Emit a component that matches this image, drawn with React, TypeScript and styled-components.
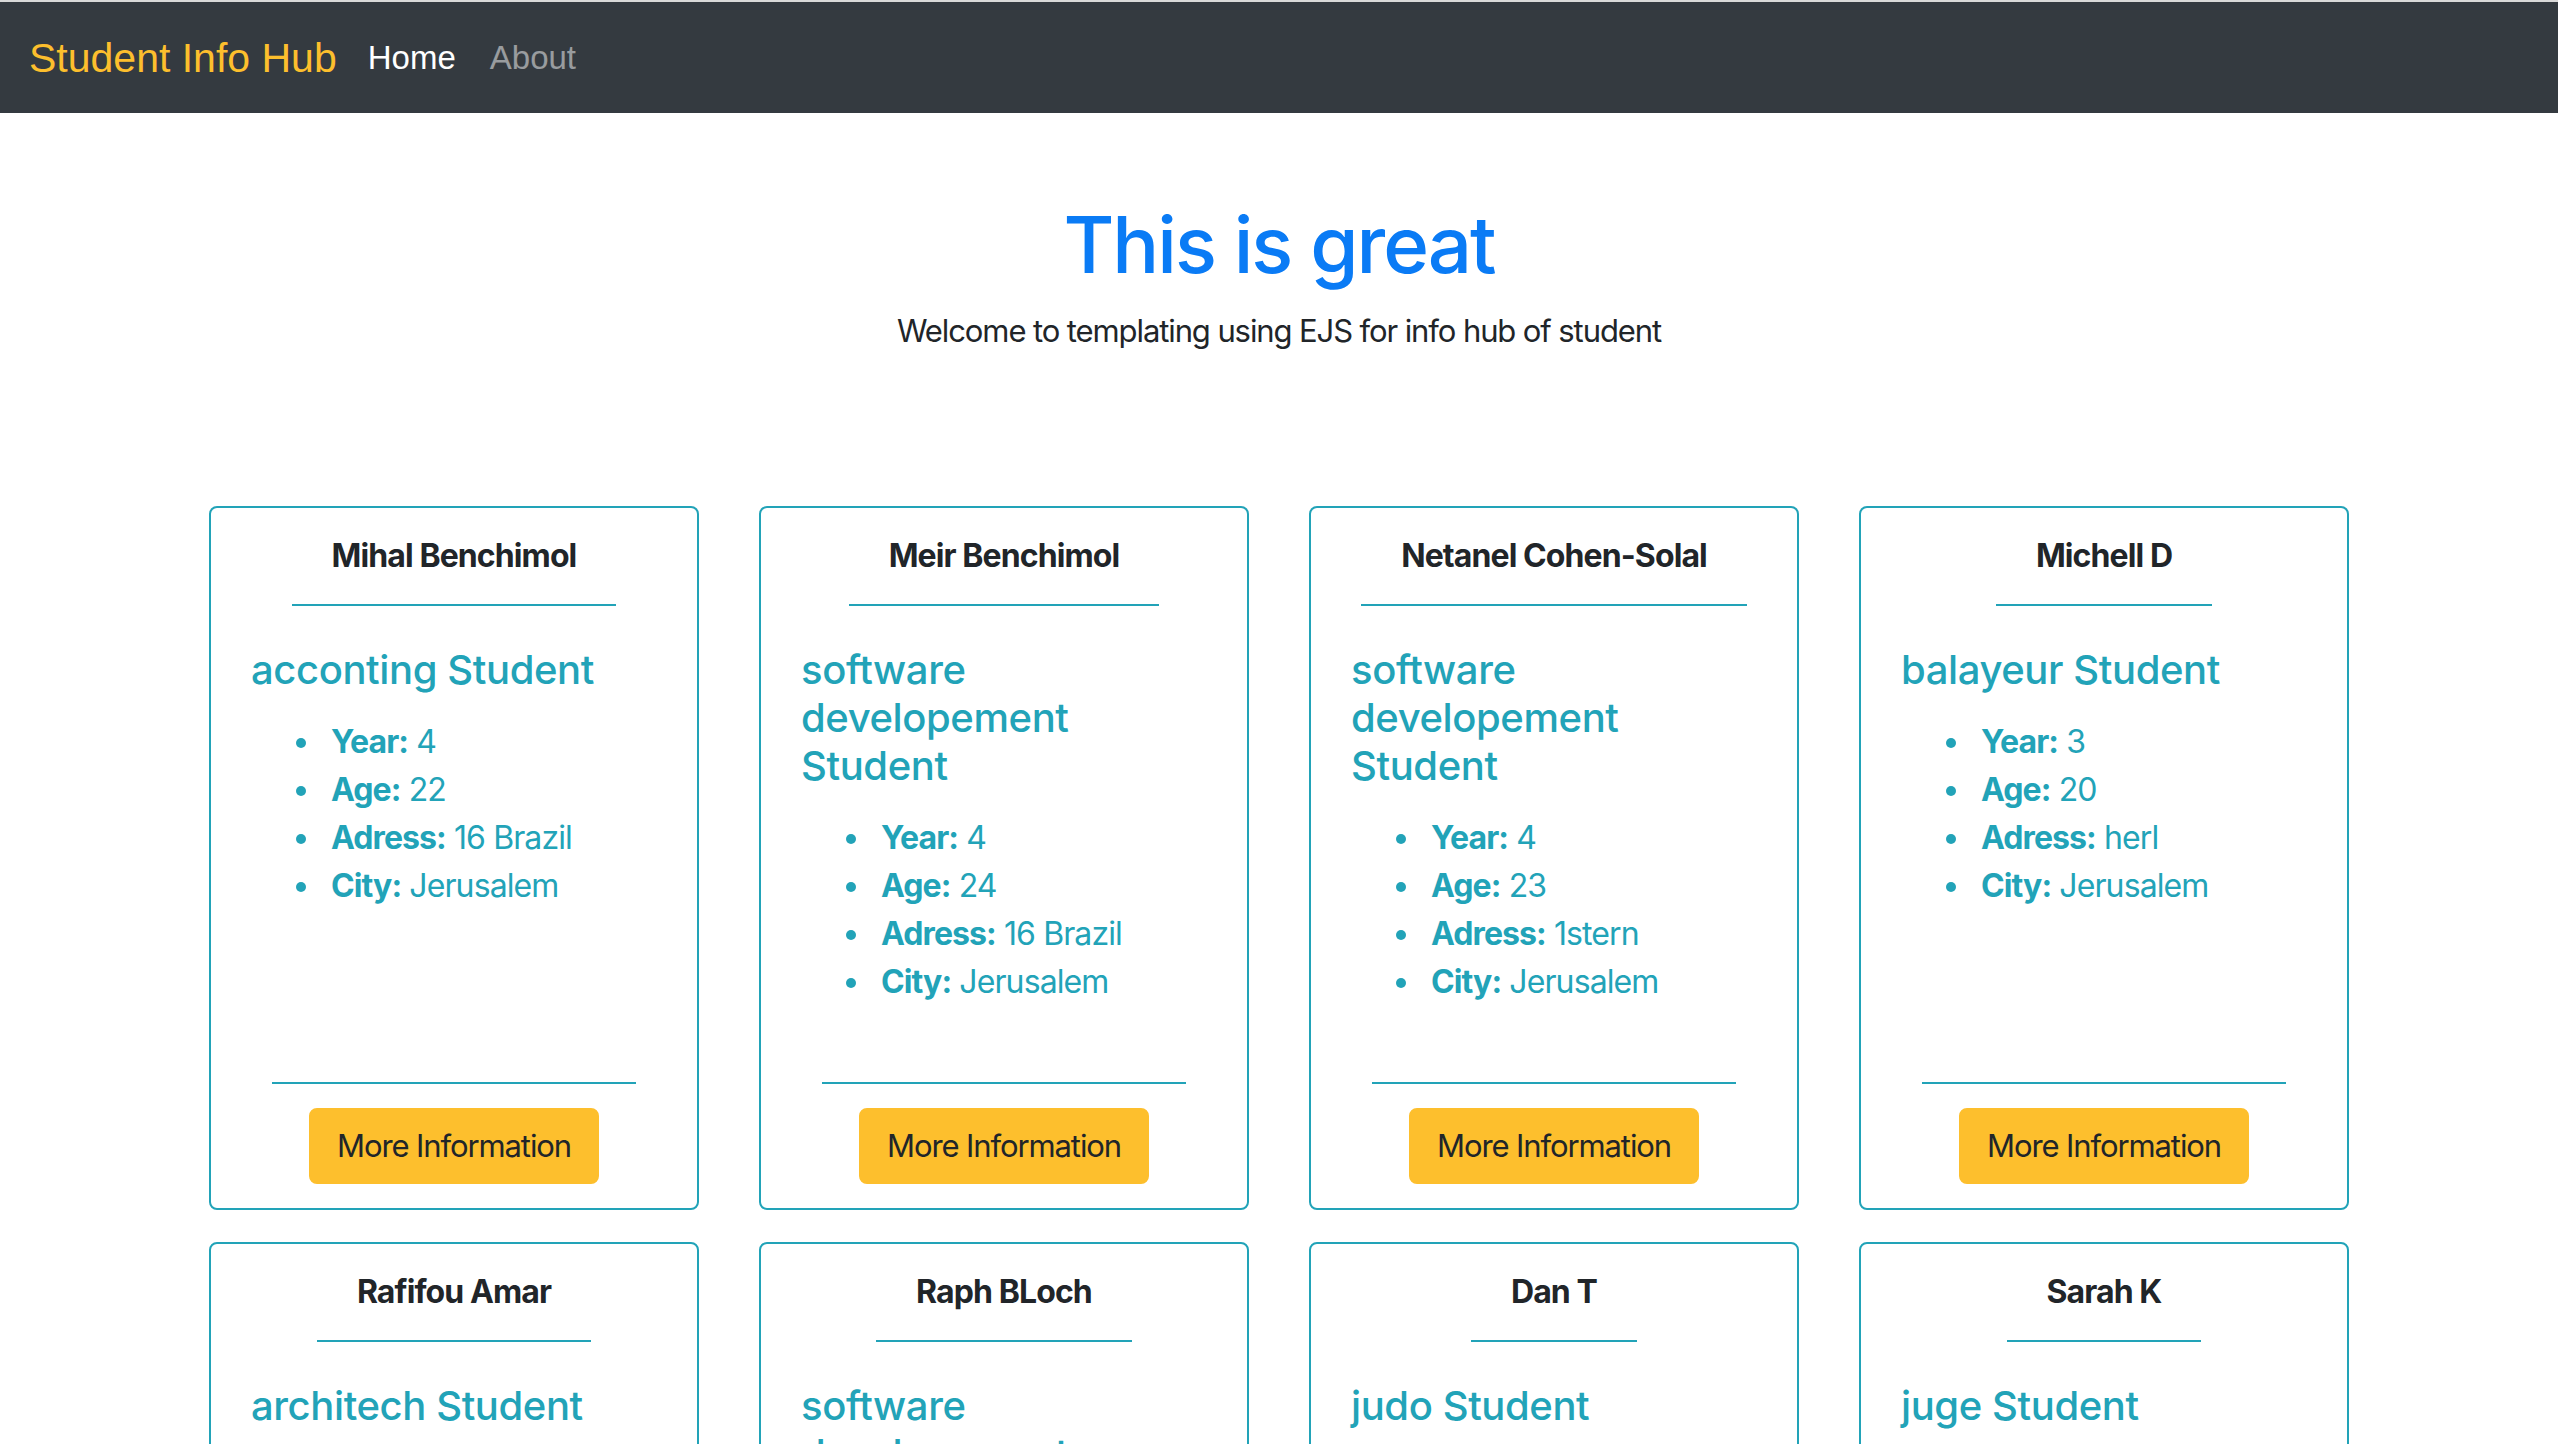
import { FC } from "react";
import styled, { createGlobalStyle } from "styled-components";

interface IStudent {
	name: string;
	major: string;
	year: number;
	age: number;
	address: string;
	city: string;
}

const students: IStudent[] = [
	{ name: "Mihal Benchimol", major: "acconting", year: 4, age: 22, address: "16 Brazil", city: "Jerusalem" },
	{ name: "Meir Benchimol", major: "software developement", year: 4, age: 24, address: "16 Brazil", city: "Jerusalem" },
	{ name: "Netanel Cohen-Solal", major: "software developement", year: 4, age: 23, address: "1stern", city: "Jerusalem" },
	{ name: "Michell D", major: "balayeur", year: 3, age: 20, address: "herl", city: "Jerusalem" },
	{ name: "Rafifou Amar", major: "architech", year: 5, age: 25, address: "12 Jaffa", city: "Jerusalem" },
	{ name: "Raph BLoch", major: "software developement", year: 2, age: 21, address: "4 Herzl", city: "Jerusalem" },
	{ name: "Dan T", major: "judo", year: 1, age: 19, address: "7 Agron", city: "Jerusalem" },
	{ name: "Sarah K", major: "juge", year: 3, age: 26, address: "9 Ben Yehuda", city: "Jerusalem" },
];

const GlobalStyle = createGlobalStyle`
	html, body {
		margin: 0;
		padding: 0;
		overflow: hidden;
		background: #fff;
	}
	* {
		box-sizing: border-box;
	}
`;

const StudentCard: FC<{ student: IStudent }> = ({ student }) => (
	<Card>
		<CardHeader>{student.name}</CardHeader>
		<CardBody>
			<CardTitle>{student.major} Student</CardTitle>
			<InfoList>
				<li>
					<strong>Year:</strong> {student.year}
				</li>
				<li>
					<strong>Age:</strong> {student.age}
				</li>
				<li>
					<strong>Adress:</strong> {student.address}
				</li>
				<li>
					<strong>City:</strong> {student.city}
				</li>
			</InfoList>
		</CardBody>
		<CardFooter>
			<MoreButton>More Information</MoreButton>
		</CardFooter>
	</Card>
);

export default function App() {
	return (
		<>
			<GlobalStyle />
			<Page>
				<Navbar>
					<Brand>Student Info Hub</Brand>
					<NavLink $active>Home</NavLink>
					<NavLink>About</NavLink>
				</Navbar>
				<Hero>
					<HeroTitle>This is great</HeroTitle>
					<HeroText>Welcome to templating using EJS for info hub of student</HeroText>
				</Hero>
				<CardGrid>
					{students.map((s, i) => (
						<StudentCard key={i} student={s} />
					))}
				</CardGrid>
			</Page>
		</>
	);
}

const Page = styled.div`
	width: 100%;
	height: 1444px;
	overflow: hidden;
	font-family: Inter, "Noto Sans", sans-serif;
	color: #212529;
`;

const Navbar = styled.nav`
	height: 113px;
	border-top: 2px solid #d9d9d9;
	background: #343a40;
	display: flex;
	align-items: center;
	padding: 0 29px;
	font-family: "Liberation Sans", Arial, sans-serif;
`;

const Brand = styled.span`
	color: #fdbf2d;
	font-size: 41px;
	line-height: 60px;
	margin-right: 31px;
`;

const NavLink = styled.span<{ $active?: boolean }>`
	color: ${({ $active }) => ($active ? "#ffffff" : "rgba(255, 255, 255, 0.5)")};
	font-size: 33px;
	line-height: 48px;
	margin-right: 34px;
`;

const Hero = styled.header`
	text-align: center;
	padding-top: 84px;
`;

const HeroTitle = styled.h1`
	margin: 0 0 14px;
	font-size: 78px;
	font-weight: 500;
	line-height: 96px;
	color: #0a7bf5;
	letter-spacing: -2px;
`;

const HeroText = styled.p`
	margin: 0;
	font-size: 31px;
	line-height: 48px;
	color: #212529;
	letter-spacing: -1.1px;
`;

const CardGrid = styled.section`
	display: grid;
	grid-template-columns: repeat(4, 490px);
	column-gap: 60px;
	row-gap: 32px;
	justify-content: center;
	margin-top: 151px;
`;

const Card = styled.article`
	display: flex;
	flex-direction: column;
	align-items: stretch;
	border: 2px solid #22a3b8;
	border-radius: 8px;
	background: #fff;
	min-height: 702px;
`;

const CardHeader = styled.h5`
	align-self: center;
	margin: 0;
	padding: 24px 40px;
	border-bottom: 2px solid #22a3b8;
	font-size: 32px;
	font-weight: 700;
	line-height: 48px;
	color: #212529;
	letter-spacing: -0.9px;
`;

const CardBody = styled.div`
	padding: 40px 40px 44px;
`;

const CardTitle = styled.h5`
	margin: 0 0 24px;
	font-size: 40px;
	font-weight: 500;
	line-height: 48px;
	color: #22a3b8;
	letter-spacing: -0.4px;
`;

const InfoList = styled.ul`
	margin: 0 0 32px;
	padding-left: 80px;
	list-style: none;
	color: #22a3b8;
	font-size: 32px;
	line-height: 48px;
	letter-spacing: -0.9px;

	li {
		position: relative;
	}

	li::before {
		content: "";
		position: absolute;
		left: -35px;
		top: 20px;
		width: 10px;
		height: 10px;
		border-radius: 50%;
		background: #22a3b8;
	}

	strong {
		font-weight: 700;
	}
`;

const CardFooter = styled.div`
	margin-top: auto;
	align-self: center;
	width: 75%;
	border-top: 2px solid #22a3b8;
	padding: 24px;
	text-align: center;
`;

const MoreButton = styled.button`
	font-family: Inter, "Noto Sans", sans-serif;
	font-size: 31px;
	line-height: 48px;
	padding: 12px 26px;
	background: #fdbf2d;
	border: 2px solid #fdbf2d;
	border-radius: 8px;
	color: #212529;
	letter-spacing: -1.1px;
	cursor: pointer;
`;
